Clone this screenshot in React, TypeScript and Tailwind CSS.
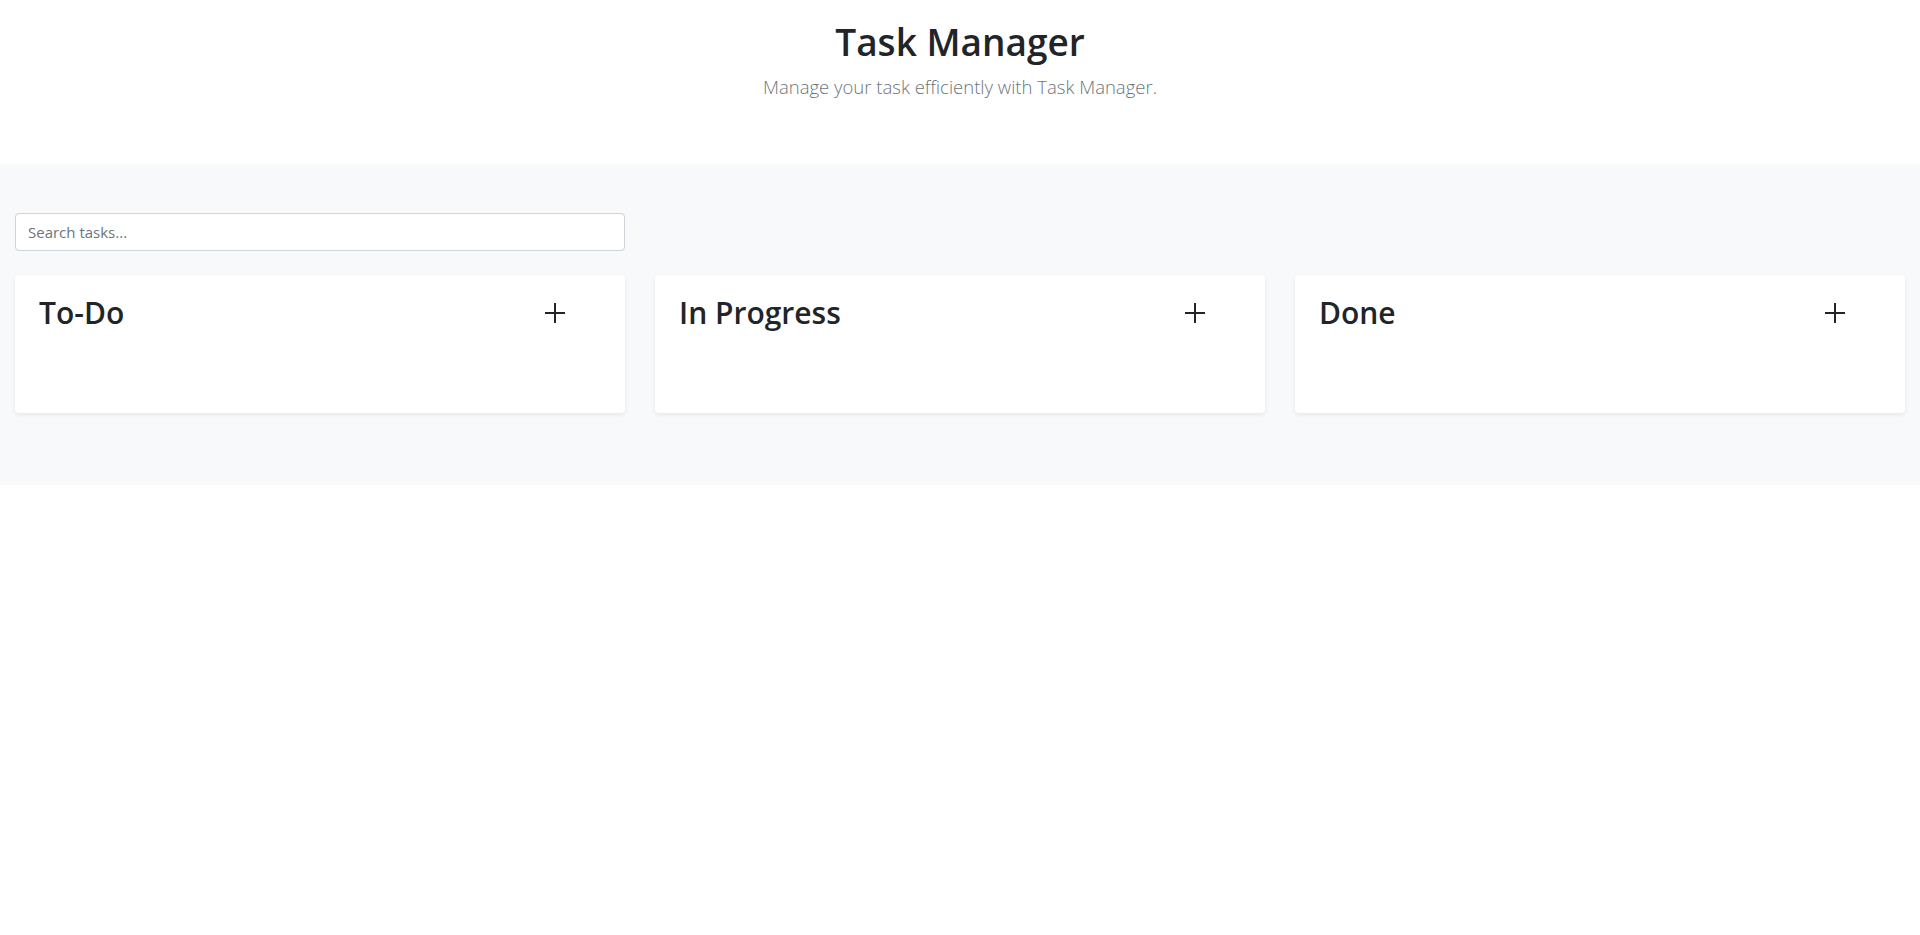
export default function App() {
  const columns = [
    { id: 'todo', title: 'To-Do' },
    { id: 'progress', title: 'In Progress' },
    { id: 'done', title: 'Done' },
  ];

  return (
    <div className="min-h-screen bg-white text-[#212529] font-['Open_Sans',sans-serif]">
      <header className="pt-[18px] pb-[62px] text-center">
        <h1 className="text-[37px] leading-[48px] font-semibold mb-[6px]">Task Manager</h1>
        <p className="text-[18.5px] leading-[30px] font-light text-[#6c757d]">
          Manage your task efficiently with Task Manager.
        </p>
      </header>

      <section className="bg-[#f8f9fa] pt-[49px] pb-[72px] px-[15px]">
        <div className="grid grid-cols-3 gap-[30px]">
          <input
            type="text"
            placeholder="Search tasks..."
            className="h-[38px] w-full rounded-[4px] border border-[#ced4da] bg-white px-3 text-[15px] text-[#495057] placeholder:text-[#6c757d] outline-none"
          />
        </div>

        <div className="grid grid-cols-3 gap-[30px] mt-6">
          {columns.map((col) => (
            <div
              key={col.id}
              className="h-[138px] rounded-[4px] bg-white shadow-[0_2px_4px_rgba(0,0,0,0.075)] px-6 pt-[19px]"
            >
              <div className="flex items-center justify-between">
                <h3 className="text-[30px] leading-[38px] font-semibold">{col.title}</h3>
                <button className="mr-[36px] flex h-[38px] w-[20px] items-center justify-center text-[#212529]">
                  <svg width="20" height="20" viewBox="0 0 20 20" fill="none" stroke="currentColor" strokeWidth="2">
                    <path d="M10 0v20M0 10h20" />
                  </svg>
                </button>
              </div>
            </div>
          ))}
        </div>
      </section>
    </div>
  );
}
